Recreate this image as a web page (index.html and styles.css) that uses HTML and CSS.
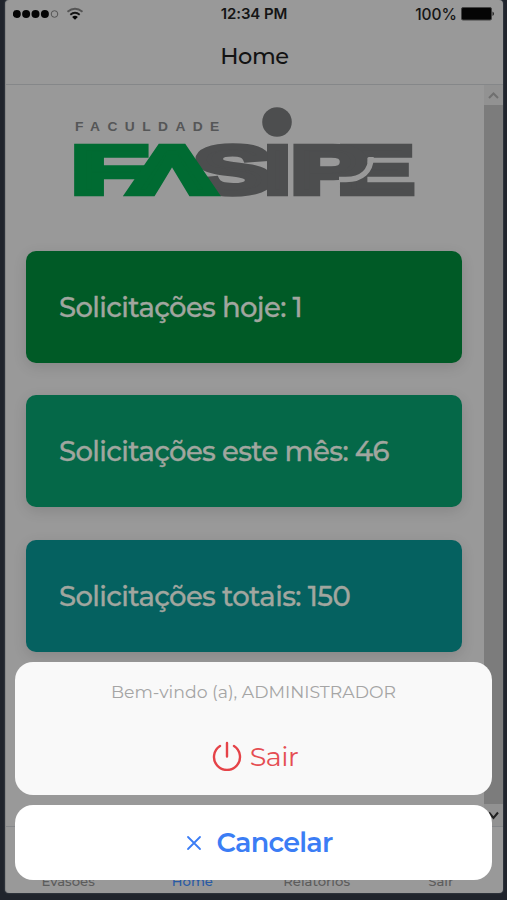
FILE: index.html
```html
<!DOCTYPE html>
<html lang="pt-BR">
<head>
<meta charset="utf-8">
<title>Home</title>
<link rel="stylesheet" href="styles.css">
</head>
<body>
<div class="phone">
  <header class="status">
    <div class="signal">
      <svg width="72" height="16" viewBox="0 0 72 16">
        <g fill="#050505"><circle cx="3.800" cy="8" r="4"/><circle cx="13.100" cy="8" r="4"/><circle cx="22.500" cy="8" r="4"/><circle cx="31.900" cy="8" r="4"/></g>
        <circle cx="41.500" cy="8" r="3.300" fill="none" stroke="#555" stroke-width="1"/>
        <g fill="none" stroke="#151515" stroke-width="1.900"><path d="M54.500 5.700Q62 -.3 69.500 5.700" stroke="#555"/><path d="M57.300 8.700Q62 5 66.700 8.700"/></g>
        <path d="M59.100 10.900Q62 8.600 64.900 10.900L62 13.700Z" fill="#050505"/>
      </svg>
    </div>
    <div class="clock">12:34 PM</div>
    <div class="battery"><span>100%</span>
      <svg width="34" height="14" viewBox="0 0 34 14"><rect x=".5" y=".5" width="30" height="12.500" rx="1.500" fill="#050505" stroke="#444"/><path d="M31.500 4.500Q34.500 6.700 31.500 9Z" fill="#222"/></svg>
    </div>
  </header>
  <h1 class="title">Home</h1>
  <main class="content">
    <div class="page">
      <svg class="logo" width="350" height="100" viewBox="70 100 350 100">
        <text class="faculty" transform="translate(75 130.500) scale(1.150 1)" textLength="125.500">FACULDADE</text>
        <g class="mark grey">
          <text transform="translate(194.100 192.500) scale(1.760 1)">S</text>
          <text transform="translate(265.500 192.750) scale(1.310 1.020)">I</text>
          <text transform="translate(338 192.750) scale(1.710 1.020)">E</text>
          <text transform="translate(291.600 192.750) scale(1.670 1.020)">P</text>
        </g>
        <path d="M371 157C371 171 362 179.500 346 179.500H339" fill="none" stroke="#999" stroke-width="5.500"/>
        <circle cx="277" cy="122" r="14.800" fill="#4d4e4f"/>
        <g class="mark green">
          <text transform="translate(71.900 192.750) scale(1.860 1.020)">F</text>
          <text transform="translate(130.800 192.750) scale(1.870 1.020)">Λ</text>
        </g>
      </svg>
      <section class="card today">Solicitações hoje: 1</section>
      <section class="card month">Solicitações este mês: 46</section>
      <section class="card total">Solicitações totais: 150</section>
    </div>
    <div class="scrollbar">
      <svg width="19" height="20" viewBox="0 0 19 20"><path d="M5 13L9.500 8.500L14 13" fill="none" stroke="#707070" stroke-width="2"/></svg>
      <div class="thumb"></div>
      <svg width="19" height="22" viewBox="0 0 19 22"><path d="M5 8.500L9.500 14L14 8.500" fill="none" stroke="#222" stroke-width="2"/></svg>
    </div>
  </main>
  <nav class="tabs"><span>Evasões</span><span class="active">Home</span><span>Relatórios</span><span>Sair</span></nav>
  <div class="sheet">
    <div class="group">
      <p class="welcome">Bem-vindo (a), ADMINISTRADOR</p>
      <div class="action">
        <svg width="30" height="30" viewBox="0 0 30 30" fill="none" stroke="#e54348" stroke-width="2.400" stroke-linecap="round"><path d="M15 2V15.500M8 5A13 13 0 1 0 22 5"/></svg>
        <span class="leave">Sair</span>
      </div>
    </div>
    <div class="cancel">
      <svg width="16" height="16" viewBox="0 0 16 16" fill="none" stroke="#3b7df5" stroke-width="1.800" stroke-linecap="round"><path d="M2 2L14 14M14 2L2 14"/></svg>
      <span class="cancel-text">Cancelar</span>
    </div>
  </div>
</div>
</body>
</html>
```
FILE: styles.css
```css
* { box-sizing: border-box; }
body { margin: 0; height: 900px; background: #20242c; font-family: Montserrat, Inter, sans-serif; overflow: hidden; }
.phone { position: relative; width: 498px; height: 893px; margin-left: 5px; background: #999; border-radius: 4px; border-left: 1px solid #888; display: flex; flex-direction: column; overflow: hidden; box-shadow: 0 0 2px #555b64; }
.status { height: 28px; display: grid; grid-template-columns: 1fr auto 1fr; align-items: center; padding: 0 8px 0 7px; font-family: Inter, sans-serif; font-size: 15.5px; color: #151515; }
.signal, .battery { display: flex; align-items: center; }
.battery { justify-content: flex-end; gap: 4px; font-weight: 500; }
.clock { font-weight: 600; font-size: 15px; letter-spacing: -.1px; line-height: 26px; }
.title { margin: 0; height: 57px; border-bottom: 1px solid #858789; text-align: center; font-size: 22.5px; line-height: 57px; font-weight: 500; color: #131313; letter-spacing: -.4px; }
.content { height: 741px; display: flex; }
.page { flex: 1; display: flex; flex-direction: column; padding: 15px 22px 0 20px; }
.logo { margin: 0 0 51px 44px; flex: none; }
.faculty { font: bold 12px "Liberation Sans", sans-serif; fill: #555657; }
.mark { font: bold 66px "Liberation Sans", sans-serif; }
.mark text { stroke-width: 6.5px; stroke-linejoin: miter; }
.grey { fill: #4d4e4f; stroke: #4d4e4f; }
.green { fill: #006b32; stroke: #006b32; }
.card { flex: none; height: 112px; margin-bottom: 32px; border-radius: 10px; padding-left: 33px; line-height: 112px; font-size: 27.5px; font-weight: 500; color: #a1a69f; box-shadow: 0 4px 14px rgba(0,0,0,.12); white-space: nowrap; letter-spacing: -.63px; -webkit-text-stroke: .3px #a1a69f; }
.today { background: #005a26; }
.month { background: #056848; margin-bottom: 33px; }
.total { background: #056160; }
.scrollbar { width: 19px; display: flex; flex-direction: column; background: #929292; }
.thumb { flex: 1; background: #7c7c7c; }
.tabs { flex: 1; border-top: 1px solid #85878a; display: grid; grid-template-columns: repeat(4, 1fr); align-items: end; text-align: center; font-size: 13.2px; font-weight: 500; color: #5c5c5c; line-height: 16px; padding-bottom: 4px; }
.active { color: #2859a5; }
.sheet { position: absolute; left: 9px; right: 11px; bottom: 13px; display: flex; flex-direction: column; gap: 10px; }
.group { height: 133px; border-radius: 18px; background: #f9f9f9; display: flex; flex-direction: column; }
.welcome { margin: 0; height: 60px; line-height: 60px; text-align: center; font-size: 17.3px; color: #a5a5a5; }
.action, .cancel { display: flex; align-items: center; justify-content: center; }
.action { height: 68px; gap: 8px; color: #e54d52; font-size: 27px; padding-left: 3px; letter-spacing: -.5px; }
.cancel { height: 75px; border-radius: 18px; background: #fff; gap: 15px; color: #3b7df5; font-size: 27px; font-weight: 600; padding-left: 11px; letter-spacing: -.75px; }
```
